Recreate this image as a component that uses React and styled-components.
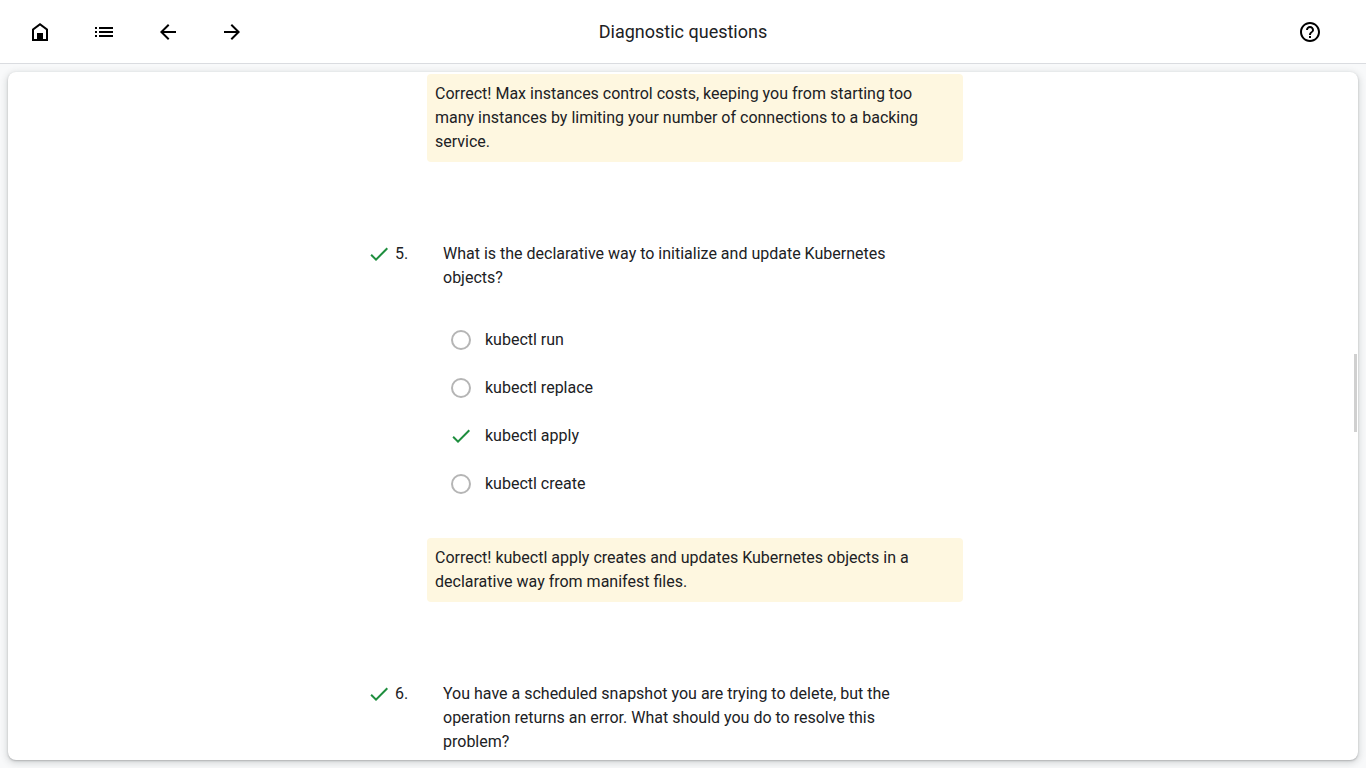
import React from "react";
import styled, { createGlobalStyle } from "styled-components";
import { MdList, MdArrowBack, MdArrowForward, MdHelpOutline, MdCheck } from "react-icons/md";

const GlobalStyle = createGlobalStyle`
  *, *::before, *::after { box-sizing: border-box; }
  body {
    margin: 0;
    background: #f8f9fa;
    color: #202124;
    font: 400 16px/24px Roboto, sans-serif;
  }
`;

const Page = styled.div`
  display: flex;
  flex-direction: column;
  height: 100vh;
`;

const Header = styled.header`
  display: grid;
  grid-template-columns: 1fr auto 1fr;
  align-items: center;
  flex: none;
  height: 64px;
  padding: 0 16px;
  background: #fff;
  border-bottom: 1px solid #dadce0;
`;

const Actions = styled.nav`
  display: flex;
  gap: 16px;
  justify-content: ${(p) => (p.$end ? "flex-end" : "flex-start")};
  padding-right: ${(p) => (p.$end ? "16px" : "0")};
`;

const IconButton = styled.button`
  display: flex;
  align-items: center;
  justify-content: center;
  width: 48px;
  height: 48px;
  padding: 0;
  border: 0;
  border-radius: 50%;
  background: none;
  color: #000;
  cursor: pointer;
`;

const Title = styled.h1`
  margin: 0;
  font: 400 18px/24px "Google Sans", Roboto, sans-serif;
`;

const Panel = styled.main`
  position: relative;
  flex: 1;
  min-height: 0;
  margin: 8px;
  padding-top: 2px;
  overflow: hidden;
  background: #fff;
  border-radius: 8px;
  box-shadow: 0 1px 2px rgba(60, 64, 67, 0.3), 0 2px 6px 2px rgba(60, 64, 67, 0.15);
`;

const ScrollThumb = styled.div`
  position: absolute;
  top: 41%;
  right: 1px;
  width: 3px;
  height: 78px;
  background: #d0d0d0;
`;

const Quiz = styled.div`
  display: flex;
  flex-direction: column;
  gap: 80px;
  max-width: 640px;
  margin: 0 auto;
  padding: 0 40px 0 4px;
`;

const Question = styled.section`
  display: grid;
  grid-template-columns: 24px 28px 1fr;
  column-gap: 4px;
`;

const Status = styled(MdCheck)`
  color: #1e8e3e;
`;

const Body = styled.div`
  grid-column: 3;
  min-width: 0;
`;

const Choices = styled.fieldset`
  margin: 0 0 30px;
  padding: 0;
  border: 0;
`;

const Prompt = styled.legend`
  margin-bottom: 26px;
  padding: 0 56px 0 16px;
`;

const Choice = styled.label`
  display: flex;
  align-items: center;
  gap: 14px;
  height: 48px;
  padding-left: 24px;
`;

const Mark = styled.span`
  display: grid;
  place-items: center;
  place-content: center;
  width: 20px;
  height: 20px;
  color: #1e8e3e;

  > * { grid-area: 1 / 1; }
  svg { pointer-events: none; }
`;

const Radio = styled.input`
  appearance: none;
  width: 20px;
  height: 20px;
  margin: 0;
  border: 2px solid #b5b5b5;
  border-radius: 50%;

  &:checked { border-color: transparent; }
`;

const Feedback = styled.p`
  margin: 0;
  padding: 8px;
  background: #fef7e0;
  border-radius: 4px;
`;

const HomeIcon = () => (
  <svg width="24" height="24" viewBox="0 0 24 24" fill="currentColor" aria-hidden="true">
    <path d="M4 21V9l8-6 8 6v12H4zm2-2h3v-6h6v6h3v-9l-6-4.5L6 10v9z" />
  </svg>
);

const questions = [
  {
    feedback:
      "Correct! Max instances control costs, keeping you from starting too many instances by limiting your number of connections to a backing service.",
  },
  {
    number: 5,
    prompt: "What is the declarative way to initialize and update Kubernetes objects?",
    choices: ["kubectl run", "kubectl replace", "kubectl apply", "kubectl create"],
    answer: "kubectl apply",
    feedback:
      "Correct! kubectl apply creates and updates Kubernetes objects in a declarative way from manifest files.",
  },
  {
    number: 6,
    prompt:
      "You have a scheduled snapshot you are trying to delete, but the operation returns an error. What should you do to resolve this problem?",
    choices: [],
  },
];

export default function App() {
  return (
    <Page>
      <GlobalStyle />
      <Header>
        <Actions aria-label="Course">
          <IconButton aria-label="Home"><HomeIcon /></IconButton>
          <IconButton aria-label="Contents"><MdList size={24} /></IconButton>
          <IconButton aria-label="Previous"><MdArrowBack size={24} /></IconButton>
          <IconButton aria-label="Next"><MdArrowForward size={24} /></IconButton>
        </Actions>
        <Title>Diagnostic questions</Title>
        <Actions $end aria-label="Support">
          <IconButton aria-label="Help"><MdHelpOutline size={24} /></IconButton>
        </Actions>
      </Header>
      <Panel>
        <Quiz>
          {questions.map((q, i) => (
            <Question key={i}>
              {q.number && (
                <>
                  <Status size={24} />
                  <span>{q.number}.</span>
                </>
              )}
              <Body>
                {q.prompt && (
                  <Choices>
                    <Prompt>{q.prompt}</Prompt>
                    {q.choices.map((c) => (
                      <Choice key={c}>
                        <Mark>
                          <Radio type="radio" name={`q${q.number}`} defaultChecked={c === q.answer} />
                          {c === q.answer && <MdCheck size={24} />}
                        </Mark>
                        {c}
                      </Choice>
                    ))}
                  </Choices>
                )}
                {q.feedback && <Feedback>{q.feedback}</Feedback>}
              </Body>
            </Question>
          ))}
        </Quiz>
        <ScrollThumb />
      </Panel>
    </Page>
  );
}
